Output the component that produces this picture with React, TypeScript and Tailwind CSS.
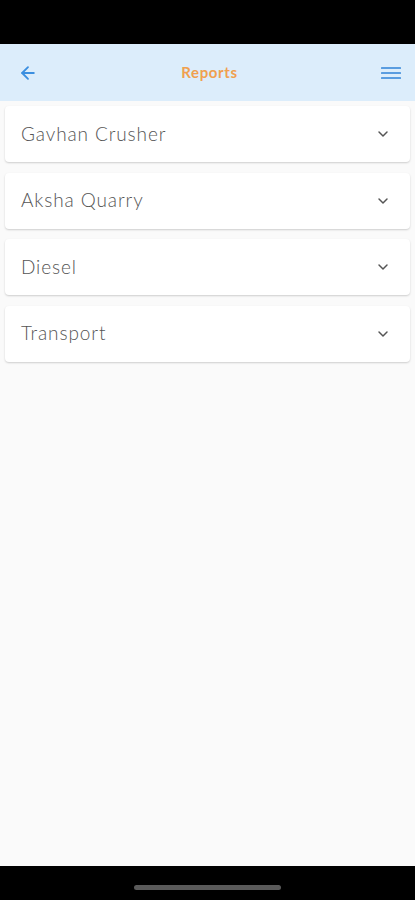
import {ArrowLeft, ChevronDown} from "lucide-react";
import React from "react";

const reports = ["Gavhan Crusher", "Aksha Quarry", "Diesel", "Transport"]

function ReportRow({title}: {title: string}) {
  return (
    <div className="flex h-[56px] items-center justify-between rounded-[4px] bg-white pl-[16px] pr-[19px] shadow-[0_1px_2px_rgba(0,0,0,0.18)]">
      <span className="text-[19px] font-light tracking-[0.9px] text-[#555555]">{title}</span>
      <ChevronDown className="h-[16px] w-[16px] text-[#555555]" strokeWidth={2.2}/>
    </div>
  )
}

export default function App() {
  return (
    <div className="flex h-[900px] w-[415px] flex-col bg-[#fafafa] font-['Lato','Noto_Sans',sans-serif]">
      <div className="h-[44px] shrink-0 bg-black"/>
      <header className="flex h-[57px] shrink-0 items-center justify-between bg-[#dcedfb] pl-[18px] pr-[14px]">
        <ArrowLeft className="h-[20px] w-[20px] text-[#3b8fe0]" strokeWidth={2.2}/>
        <h1 className="text-[15px] font-bold tracking-[0.6px] text-[#f0a04e]">Reports</h1>
        <svg width="20" height="16" viewBox="0 0 20 16" className="text-[#5a9de0]">
          <rect x="0" y="2" width="20" height="2" rx="0.5" fill="currentColor"/>
          <rect x="0" y="7" width="20" height="2" rx="0.5" fill="currentColor"/>
          <rect x="0" y="12" width="20" height="2" rx="0.5" fill="currentColor"/>
        </svg>
      </header>
      <main className="flex flex-1 flex-col gap-[10.5px] px-[5px] pt-[5px]">
        {reports.map((r) => (
          <ReportRow key={r} title={r}/>
        ))}
      </main>
      <div className="flex h-[34px] shrink-0 items-center justify-center bg-black">
        <div className="mt-[8px] h-[5px] w-[147px] rounded-full bg-[#5a5a5a]"/>
      </div>
    </div>
  )
}
